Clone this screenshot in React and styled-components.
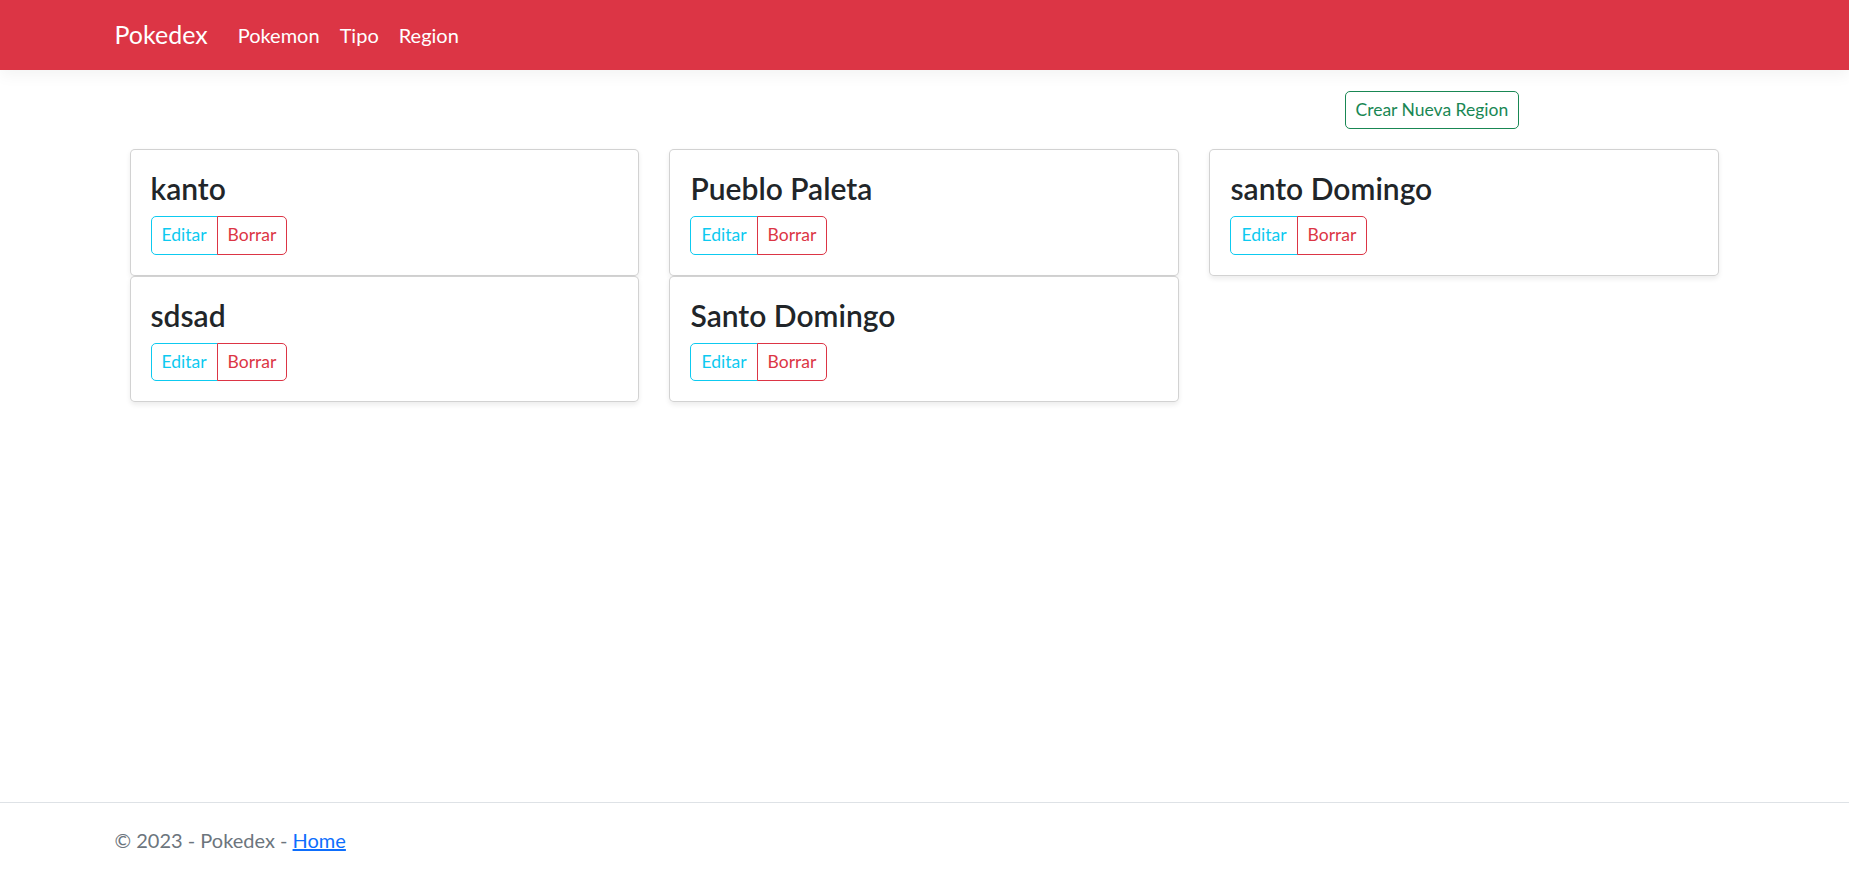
import React from "react";
import styled, { createGlobalStyle } from "styled-components";

const Global = createGlobalStyle`
  *, *::before, *::after { box-sizing: border-box; }
  html, body { margin: 0; padding: 0; }
  body {
    font-family: Lato, "Noto Sans", sans-serif;
    font-size: 20px;
    line-height: 1.5;
    color: #212529;
    background: #fff;
  }
`;

const Page = styled.div`
  min-height: 100vh;
  display: flex;
  flex-direction: column;
`;

const Container = styled.div`
  width: 100%;
  max-width: 1650px;
  margin: 0 auto;
  padding: 0 15px;
`;

const Navbar = styled.nav`
  background: #dc3545;
  padding: 10px 0;
  margin-bottom: 21px;
  box-shadow: 0 5px 15px rgba(0, 0, 0, 0.05);
`;

const NavInner = styled(Container)`
  display: flex;
  align-items: center;
`;

const Brand = styled.a`
  color: #fff;
  font-size: 25px;
  line-height: 37.5px;
  padding: 6.25px 0;
  margin-right: 20px;
  text-decoration: none;
`;

const NavList = styled.div`
  display: flex;
`;

const NavLink = styled.a`
  color: #fff;
  font-size: 20px;
  line-height: 30px;
  padding: 10px;
  text-decoration: none;
`;

const Main = styled(Container)`
  flex: 1;
`;

const Row = styled.div`
  display: flex;
  flex-wrap: wrap;
  margin-bottom: ${(p) => p.$mb || 0}px;
`;

const Col = styled.div`
  flex: 0 0 auto;
  width: ${(p) => (p.$span / 12) * 100}%;
  margin-left: ${(p) => ((p.$offset || 0) / 12) * 100}%;
  padding: 0 15px;
`;

const Card = styled.div`
  background: #fff;
  border: 1px solid rgba(0, 0, 0, 0.175);
  border-radius: 5px;
  box-shadow: 0 2.5px 5px rgba(0, 0, 0, 0.075);
`;

const CardBody = styled.div`
  padding: 20px;
`;

const CardTitle = styled.h4`
  margin: 0 0 10px;
  font-size: 30px;
  font-weight: 600;
  line-height: 1.2;
  color: #212529;
`;

const BtnGroup = styled.div`
  display: inline-flex;
`;

const Btn = styled.button`
  font-family: inherit;
  font-size: 17.5px;
  line-height: 1.5;
  padding: 5px 10px;
  background: transparent;
  color: ${(p) => p.$color};
  border: 1px solid ${(p) => p.$color};
  border-radius: 5px;
  cursor: pointer;
  ${BtnGroup} > & {
    border-radius: 0;
  }
  ${BtnGroup} > &:first-child {
    border-radius: 5px 0 0 5px;
  }
  ${BtnGroup} > &:last-child {
    border-radius: 0 5px 5px 0;
    margin-left: -1px;
  }
`;

const Footer = styled.footer`
  border-top: 1px solid #dee2e6;
  color: #6c757d;
  line-height: 75px;
  font-size: 20px;
  white-space: nowrap;
`;

const FooterLink = styled.a`
  color: #0d6efd;
  text-decoration: underline;
`;

const regions = [
  "kanto",
  "Pueblo Paleta",
  "santo Domingo",
  "sdsad",
  "Santo Domingo",
];

export default function App() {
  return (
    <Page>
      <Global />
      <Navbar>
        <NavInner>
          <Brand href="#">Pokedex</Brand>
          <NavList>
            <NavLink href="#">Pokemon</NavLink>
            <NavLink href="#">Tipo</NavLink>
            <NavLink href="#">Region</NavLink>
          </NavList>
        </NavInner>
      </Navbar>
      <Main>
        <Row $mb={20}>
          <Col $span={3} $offset={9}>
            <Btn $color="#198754">Crear Nueva Region</Btn>
          </Col>
        </Row>
        <Row>
          {regions.map((name, i) => (
            <Col $span={4} key={i}>
              <Card>
                <CardBody>
                  <CardTitle>{name}</CardTitle>
                  <BtnGroup>
                    <Btn $color="#0dcaf0">Editar</Btn>
                    <Btn $color="#dc3545">Borrar</Btn>
                  </BtnGroup>
                </CardBody>
              </Card>
            </Col>
          ))}
        </Row>
      </Main>
      <Footer>
        <Container>
          © 2023 - Pokedex - <FooterLink href="#">Home</FooterLink>
        </Container>
      </Footer>
    </Page>
  );
}
